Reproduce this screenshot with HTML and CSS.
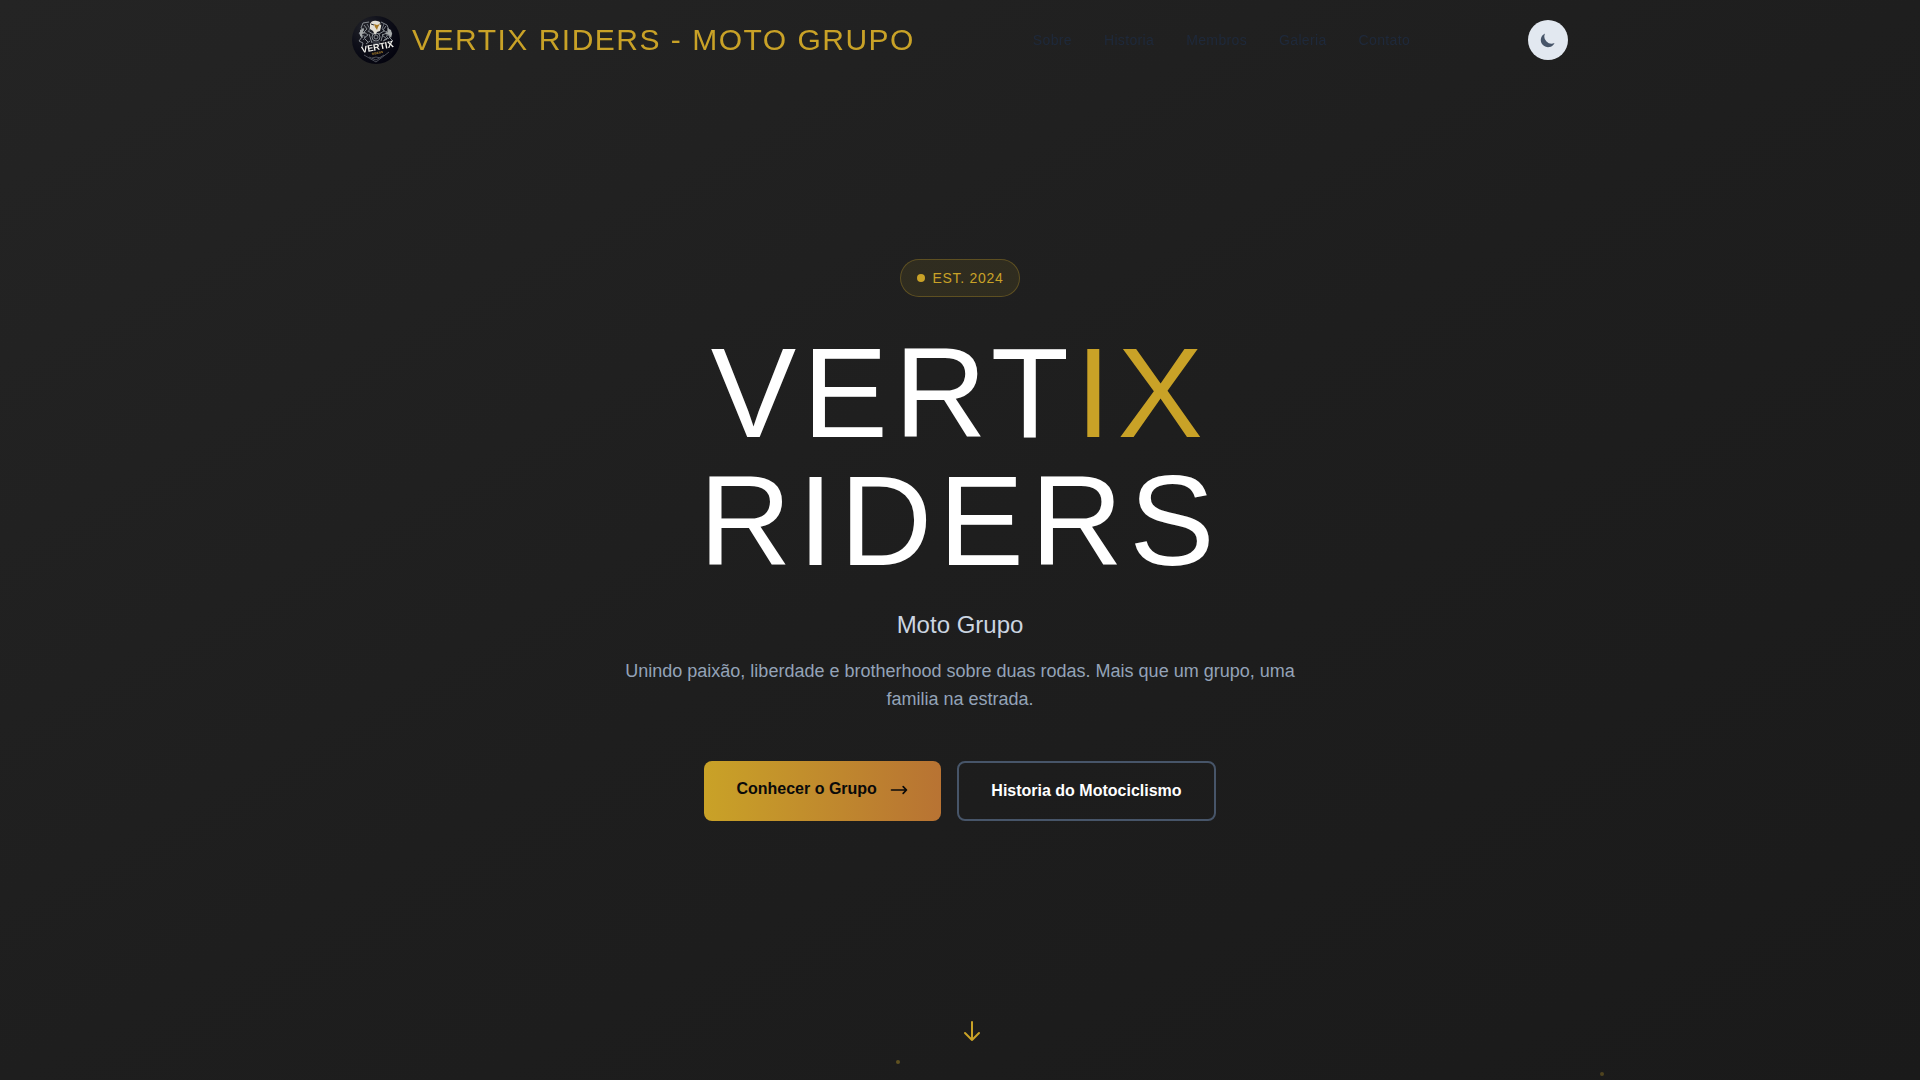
FILE: index.html
```
<!DOCTYPE html>
<html lang="pt-BR">

<head>
    <meta charset="UTF-8">
    <meta name="viewport" content="width=device-width, initial-scale=1.0">
    <title>Vertix Riders - Moto Grupo</title>
    <link rel="stylesheet" href="styles.css">
</head>

<body>
    <header class="header">
        <div class="header-inner">
            <a href="#inicio" class="brand">
                <svg class="brand-logo" viewBox="0 0 48 48" aria-hidden="true">
                    <defs>
                        <radialGradient id="logo-bg" cx="0.3" cy="0.25" r="0.8">
                            <stop offset="0" stop-color="#23242a" />
                            <stop offset="0.5" stop-color="#0e0f19" />
                            <stop offset="1" stop-color="#04040f" />
                        </radialGradient>
                    </defs>
                    <circle cx="24" cy="24" r="24" fill="url(#logo-bg)" />
                    <!-- wings and engine -->
                    <g fill="none" stroke="#858a90" stroke-width="1">
                        <path d="M17 6l-6 1-2 5 3 2-5 3 3 4-3 4 4 2-1 4M29 6l6 3 2 5-3 2 6 1-3 4 4 4-5 1" />
                        <path d="M12 9l3 4-3 3 4 3-4 3 4 4M34 10l-3 4 4 3-5 2 5 4-4 2" />
                        <path d="M16 15l5 3 3-1 3 1 5-3M17 18l3 9M31 18l-2 7M14 28l4-3M32 24l4-2" />
                        <path d="M15 8l3 5-2 3M32 8l-2 5 3 2M10 19l4 2-3 3M38 19l-4 1 3 3" stroke="#6a6f78" />
                        <circle cx="24" cy="21" r="4" />
                        <circle cx="24" cy="21" r="2" />
                        <path d="M20 26h8M21 28l7-1M12 39l12 7 13-10M17 41l7 3 8-5M20 42l4-1 5 1" stroke="#4c4f58" />
                    </g>
                    <path d="M8 14l4-2-1 4 3 1-4 1 1 4-3-2zM39 14l-4-2 1 4-3 2 4 1 2 3 1-4z" fill="#a5a9aa" />
                    <!-- eagle head -->
                    <path d="M18 8c1-3 4-4 7-3 3 0 5 3 4 6l-1 4-3 1-2 3-2-4-3-2z" fill="#e2dfd5" />
                    <path d="M22 8l3 1 3-1-2 3-1 3-2-3z" fill="#a87922" />
                    <path d="M19 8l3 1M28 7l1 2" stroke="#292a2e" />
                    <text class="logo-name" x="10" y="37" transform="rotate(-11 10 37)">VERTIX</text>
                    <text class="logo-sub" x="20" y="39" transform="rotate(-11 20 39)">RIDERS</text>
                </svg>
                <span class="brand-name">VERTIX RIDERS - MOTO GRUPO</span>
            </a>

            <nav class="nav">
                <a href="#sobre">Sobre</a>
                <a href="#historia">Historia</a>
                <a href="#membros">Membros</a>
                <a href="#galeria">Galeria</a>
                <a href="#contato">Contato</a>
            </nav>

            <button type="button" class="theme-toggle" aria-label="Alternar tema">
                <svg viewBox="0 0 20 20" fill="currentColor" aria-hidden="true">
                    <path d="M17.293 13.293A8 8 0 016.707 2.707a8.001 8.001 0 1010.586 10.586z" />
                </svg>
            </button>
        </div>
    </header>

    <main>
        <section class="hero" id="inicio">
            <div class="hero-content">
                <div class="badge">
                    <span class="badge-dot"></span>
                    <span>EST. 2024</span>
                </div>
                <h1>VERT<span class="gold">IX</span><br>RIDERS</h1>
                <p class="subtitle">Moto Grupo</p>
                <p class="description">Unindo paixão, liberdade e brotherhood sobre duas rodas. Mais que um grupo, uma familia na estrada.</p>
                <div class="actions">
                    <a href="#sobre" class="btn btn-primary">
                        Conhecer o Grupo
                        <svg viewBox="0 0 24 24" aria-hidden="true">
                            <path d="M17 8l4 4m0 0l-4 4m4-4H3" />
                        </svg>
                    </a>
                    <a href="#historia" class="btn btn-outline">Historia do Motociclismo</a>
                </div>
            </div>

            <a href="#sobre" class="scroll-down" aria-label="Rolar para baixo">
                <svg viewBox="0 0 24 24" aria-hidden="true">
                    <path d="M19 14l-7 7m0 0l-7-7m7 7V3" />
                </svg>
            </a>
            <span class="particle particle-one"></span>
            <span class="particle particle-two"></span>
        </section>
    </main>
</body>

</html>
```
FILE: styles.css
```
* {
    box-sizing: border-box;
    margin: 0;
    padding: 0;
}

body {
    font-family: "Liberation Sans", Arial, sans-serif;
    font-size: 16px;
    line-height: 24px;
    background-color: #1a1a1a;
    color: #fff;
}

a {
    color: inherit;
    text-decoration: none;
}

svg {
    display: block;
}

/* Header */
.header {
    position: fixed;
    top: 0;
    left: 0;
    right: 0;
    z-index: 10;
}

.header-inner {
    display: flex;
    align-items: center;
    justify-content: space-between;
    max-width: 1280px;
    margin: 0 auto;
    padding: 16px 32px;
}

.brand {
    display: flex;
    align-items: center;
    gap: 12px;
}

.brand-logo {
    width: 48px;
    height: 48px;
}

.logo-name {
    font-size: 9px;
    font-weight: bold;
    fill: #f4f3ee;
}

.logo-sub {
    font-size: 3px;
    font-weight: bold;
    fill: #b5882b;
}

.brand-name {
    font-size: 30px;
    line-height: 36px;
    letter-spacing: 0.05em;
    color: #c9a227;
}

.nav {
    display: flex;
    gap: 32px;
    font-size: 14px;
    line-height: 20px;
    letter-spacing: 0.025em;
    color: #1e293b;
}

.nav a:hover {
    color: #c9a227;
}

.theme-toggle {
    display: flex;
    align-items: center;
    justify-content: center;
    width: 40px;
    height: 40px;
    border: none;
    border-radius: 50%;
    background-color: #e2e8f0;
    color: #475569;
    cursor: pointer;
}

.theme-toggle svg {
    width: 18px;
    height: 18px;
}

/* Hero */
.hero {
    position: relative;
    display: flex;
    align-items: center;
    justify-content: center;
    min-height: 100vh;
    overflow: hidden;
    background: linear-gradient(to bottom right, #242424 0%, #1e1e1e 50%, #1a1a1a 100%);
}

.hero-content {
    display: flex;
    flex-direction: column;
    align-items: center;
    padding: 0 16px;
    text-align: center;
}

.badge {
    display: flex;
    align-items: center;
    gap: 8px;
    margin-bottom: 32px;
    padding: 8px 16px;
    border: 1px solid rgba(201, 162, 39, 0.3);
    border-radius: 20px;
    background-color: rgba(201, 162, 39, 0.1);
    color: #c9a227;
    font-size: 14px;
    line-height: 20px;
    letter-spacing: 0.05em;
}

.badge-dot {
    width: 8px;
    height: 8px;
    border-radius: 50%;
    background-color: #c9a227;
}

h1 {
    margin-bottom: 24px;
    font-size: 128px;
    font-weight: normal;
    line-height: 128px;
    letter-spacing: 0.05em;
}

.gold {
    color: #c9a227;
}

.subtitle {
    margin-bottom: 16px;
    font-size: 24px;
    line-height: 32px;
    color: #cbd5e1;
}

.description {
    max-width: 672px;
    margin-bottom: 48px;
    font-size: 18px;
    line-height: 28px;
    color: #94a3b8;
}

.actions {
    display: flex;
    flex-wrap: wrap;
    justify-content: center;
    gap: 16px;
}

.btn {
    padding: 16px 32px;
    border-radius: 8px;
    font-weight: bold;
}

.btn-primary {
    background: linear-gradient(90deg, #c9a227, #b87333);
    color: #0a0a0a;
}

.btn-primary svg {
    display: inline-block;
    width: 20px;
    height: 20px;
    margin-left: 8px;
    vertical-align: middle;
}

.btn-outline {
    border: 2px solid #475569;
}

.btn-primary path,
.scroll-down path {
    fill: none;
    stroke: currentColor;
    stroke-width: 2;
    stroke-linecap: round;
    stroke-linejoin: round;
}

.scroll-down {
    position: absolute;
    bottom: 37px;
    left: 50%;
    color: #c9a227;
}

.scroll-down svg {
    width: 24px;
    height: 24px;
}

.particle {
    position: absolute;
    width: 4px;
    height: 4px;
    border-radius: 50%;
    background-color: #c9a227;
    opacity: 0.4;
}

.particle-one {
    bottom: 16px;
    left: 896px;
}

.particle-two {
    bottom: 4px;
    left: 1600px;
    opacity: 0.3;
}

@media (max-width: 1100px) {
    .nav {
        display: none;
    }

    .brand-name {
        font-size: 20px;
    }

    h1 {
        font-size: 72px;
        line-height: 80px;
    }
}
```
